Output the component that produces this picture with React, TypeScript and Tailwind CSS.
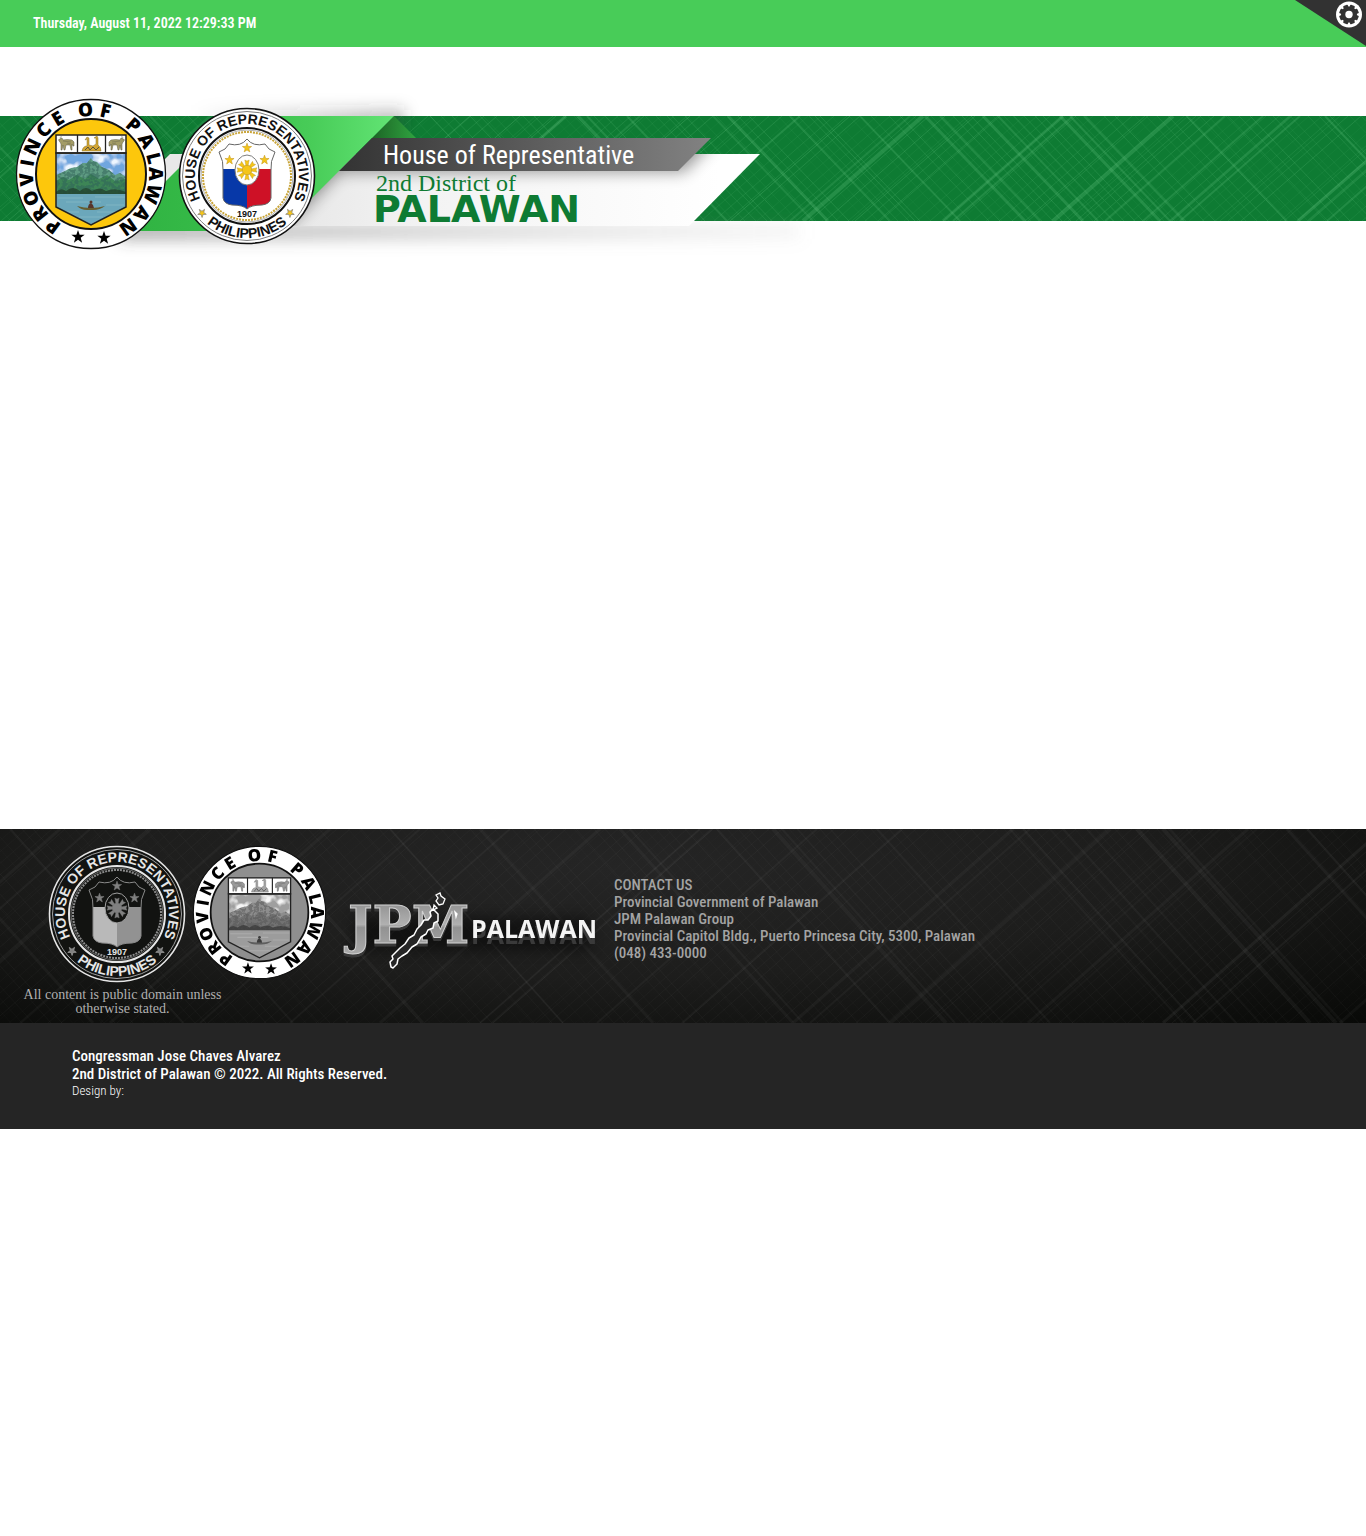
import React from "react";

const SANS = "font-['Roboto_Condensed','Roboto',sans-serif]";
const SERIF = "font-['Liberation_Serif',serif]";

const starPoints = (cx: number, cy: number, r: number, turn = 0) =>
  Array.from({ length: 10 }, (_, i) => {
    const a = ((i * 36 + turn - 90) * Math.PI) / 180;
    const q = i % 2 ? r * 0.4 : r;
    return `${(cx + q * Math.cos(a)).toFixed(2)},${(cy + q * Math.sin(a)).toFixed(2)}`;
  }).join(" ");

/* Woven diagonal lines: x at the top edge, stroke width, opacity */
type Thread = [number, number, number];

function Weave({ height, up, down, reachUp, reachDown, stroke, fine }: {
  height: number; up: Thread[]; down: Thread[]; reachUp: number; reachDown: number; stroke: string; fine: number;
}) {
  const thin = Array.from({ length: 130 }, (_, i) => i * 12 + ((i * 37) % 9));
  return (
    <svg className="absolute inset-0 h-full w-full" viewBox={`0 0 1366 ${height}`} preserveAspectRatio="xMinYMin slice" aria-hidden="true">
      <g stroke={stroke}>
        {thin.map((x, i) => (
          <g key={x} strokeWidth="1" opacity={fine * (0.3 + ((i * 7) % 6) / 6)}>
            <line x1={x} y1="0" x2={x - reachUp} y2={height} />
            <line x1={x - 180 + ((i * 5) % 7)} y1="0" x2={x - 180 + reachDown + ((i * 5) % 7)} y2={height} />
          </g>
        ))}
        {up.map(([x, w, o]) => <line key={`u${x}`} x1={x} y1="0" x2={x - reachUp} y2={height} strokeWidth={w} opacity={o} />)}
        {down.map(([x, w, o]) => <line key={`d${x}`} x1={x} y1="0" x2={x + reachDown} y2={height} strokeWidth={w} opacity={o} />)}
      </g>
    </svg>
  );
}

const bandUp: Thread[] = [
  [70, 2, 0.2], [128, 1, 0.25], [210, 2, 0.2], [470, 1, 0.3], [520, 1, 0.3], [556, 1, 0.25], [566, 3, 0.3], [640, 2, 0.2], [690, 1, 0.3], [742, 1, 0.3], [800, 2, 0.25], [850, 1, 0.3],
  [910, 2, 0.2], [923, 4, 0.28], [945, 1, 0.25], [975, 1, 0.25], [1000, 1, 0.2], [1063, 3, 0.26], [1073, 2, 0.24], [1148, 1, 0.2], [1173, 4, 0.28], [1196, 1, 0.2], [1225, 2, 0.24],
  [1263, 2, 0.24], [1290, 2, 0.26], [1300, 2, 0.26], [1340, 1, 0.16], [1418, 3, 0.3], [1428, 2, 0.2], [1447, 2, 0.24],
];
const bandDown: Thread[] = [
  [-30, 2, 0.2], [20, 2, 0.2], [60, 1, 0.2], [150, 2, 0.2], [188, 1, 0.2], [430, 1, 0.25], [480, 1, 0.2], [578, 3, 0.26], [587, 2, 0.25], [627, 2, 0.25], [672, 1, 0.2], [713, 2, 0.2], [728, 3, 0.26],
  [790, 2, 0.2], [815, 1, 0.25], [860, 2, 0.2], [925, 3, 0.26], [940, 2, 0.24], [962, 1, 0.22], [983, 3, 0.26], [998, 2, 0.24], [1014, 1, 0.2], [1043, 1, 0.22], [1060, 3, 0.28], [1070, 2, 0.26],
  [1084, 2, 0.24], [1187, 2, 0.18], [1200, 1, 0.14], [1273, 1, 0.18], [1325, 2, 0.28],
];
const floorUp: Thread[] = [
  [60, 3, 0.03], [90, 2, 0.03], [150, 4, 0.03], [240, 2, 0.03], [330, 3, 0.03], [420, 2, 0.03], [510, 2, 0.03], [600, 3, 0.03], [700, 2, 0.03], [712, 2, 0.03], [817, 2, 0.03], [902, 2, 0.03],
  [1013, 3, 0.03], [1030, 2, 0.03], [1110, 4, 0.03], [1150, 1, 0.03], [1193, 2, 0.02], [1220, 2, 0.02], [1248, 3, 0.03], [1257, 2, 0.02], [1383, 3, 0.05], [1392, 1, 0.04], [1413, 2, 0.04], [1560, 3, 0.03],
];
const floorDown: Thread[] = [
  [-80, 3, 0.03], [10, 2, 0.03], [120, 2, 0.03], [250, 3, 0.03], [390, 2, 0.03], [480, 3, 0.03], [620, 3, 0.03], [630, 2, 0.03], [717, 2, 0.03], [773, 4, 0.03], [782, 2, 0.03], [797, 1, 0.03], [830, 1, 0.03],
  [877, 2, 0.03], [1010, 2, 0.03], [1023, 2, 0.03], [1050, 2, 0.02], [1063, 2, 0.03], [1087, 2, 0.02], [1095, 1, 0.02], [1137, 4, 0.04], [1163, 4, 0.04], [1170, 2, 0.03], [1287, 3, 0.04], [1307, 2, 0.04],
];

const provinceLetters: [string, number][] = [
  ["P", -144], ["R", -128], ["O", -112], ["V", -95], ["I", -80], ["N", -65], ["C", -47], ["E", -31], ["O", -5], ["F", 13],
  ["P", 41], ["A", 59], ["L", 76], ["A", 90], ["W", 108], ["A", 128], ["N", 145],
];

const Tamaraw = () => (
  <g>
    <path d="M-8 -3 Q-9 -5 -7 -5 L-5 -6 -4 -4 Q0 -5 5 -4 L7 -2 7 2 6 2 5 0 5 6 4 6 3 1 -1 1 -2 6 -3 6 -4 1 -5 6 -6 6 -6 0 -7 -2Z" fill="#a39c66" stroke="#5c5a46" strokeWidth="0.5" />
    <path d="M-6 -5 Q-8 -8 -5 -7 M-4 -3 L4 -2 M0 -1 L4 0" stroke="#6d6a4f" strokeWidth="0.5" fill="none" />
  </g>
);

function ProvinceSeal({ className, grey = false }: { className: string; grey?: boolean }) {
  const id = grey ? "pg" : "pc";
  return (
    <svg className={className} viewBox="-76 -76 152 152" role="img" aria-label="Province of Palawan seal">
      <defs>
        <clipPath id={`${id}-shield`}><path d="M-35 -20 H35 V33 L0 51 L-35 33Z" /></clipPath>
        <filter id={`${id}-paint`} x="0" y="0" width="100%" height="100%">
          <feTurbulence type="fractalNoise" baseFrequency="0.25" numOctaves="3" seed="8" result="n" />
          <feColorMatrix in="n" type="matrix" values="0 0 0 0 0.03  0 0 0 0 0.12  0 0 0 0 0.1  8 0 0 0 -3.4" result="m" />
          <feComponentTransfer in="m" result="t"><feFuncA type="linear" slope="0.6" /></feComponentTransfer>
          <feComposite in="t" in2="SourceGraphic" operator="in" result="k" />
          <feMerge><feMergeNode in="SourceGraphic" /><feMergeNode in="k" /></feMerge>
        </filter>
        <filter id={`${id}-cloud`} x="0" y="0" width="100%" height="100%">
          <feTurbulence type="fractalNoise" baseFrequency="0.1" numOctaves="2" seed="3" result="n" />
          <feColorMatrix in="n" type="matrix" values="0 0 0 0 0.85  0 0 0 0 0.92  0 0 0 0 1  0 4 0 0 -1.8" result="m" />
          <feComposite in="m" in2="SourceGraphic" operator="in" result="k" />
          <feMerge><feMergeNode in="SourceGraphic" /><feMergeNode in="k" /></feMerge>
        </filter>
      </defs>
      <g style={{ filter: grey ? "grayscale(1)" : undefined }}>
        <circle r="74.5" fill="#fff" stroke="#111" strokeWidth="1.3" />
        <circle r="55" fill={grey ? "#8f8f8f" : "#fdc70c"} stroke="#111" strokeWidth="2" />
        <g fontFamily="Open Sans" fontWeight="800" fontSize="19" textAnchor="middle" fill="#000">
          {provinceLetters.map(([c, a], i) => <text key={i} transform={`rotate(${a})`} y="-58">{c}</text>)}
        </g>
        <polygon points={starPoints(-13, 63, 7)} />
        <polygon points={starPoints(13, 64, 7)} />
        <rect x="-35" y="-39" width="70" height="18" fill="#fff" stroke="#222" strokeWidth="1.5" />
        <path d="M-13.5 -39V-21M14.5 -39V-21" stroke="#222" strokeWidth="1.3" />
        <g transform="translate(-24 -30)"><Tamaraw /></g>
        <g transform="translate(25 -30) scale(-1 1)"><Tamaraw /></g>
        <path d="M-9 -23 Q-8 -28 -4 -28 L-4 -35 -6 -34 -4 -37 -2 -36 -2 -29 2 -28 5 -30 5 -36 3 -36 6 -38 7 -36 7 -29 Q10 -27 10 -23Z" fill="#d3a532" stroke="#85702a" strokeWidth="0.5" />
        <path d="M-6 -24 l3 -3 2 3 3 -3 3 3 3 -3" stroke="#5a5337" fill="none" strokeWidth="1" />
        <g clipPath={`url(#${id}-shield)`}>
          <rect x="-35" y="-20" width="70" height="42" fill="#6fa6df" filter={`url(#${id}-cloud)`} />
          <path d="M-35 1 L-28 -2 -20 -6 -14 -7 -8 -11 -4 -11 0 -16 2 -13 6 -12 11 -7 18 -4 24 1 29 -1 35 3 V20 H-35Z" fill="#5f9c83" filter={`url(#${id}-paint)`} />
          <path d="M-35 7 L-28 3 -22 6 -14 1 -6 5 0 0 8 5 16 1 24 7 35 5 V21 H-35Z" fill="#3d8557" filter={`url(#${id}-paint)`} />
          <path d="M-35 18 Q-30 13 -25 17 Q-18 11 -11 17 Q-5 11 1 17 Q9 12 15 17 Q24 13 35 18V22H-35Z" fill="#23422f" opacity="0.8" />
          <rect x="-35" y="20" width="70" height="32" fill="#6ba7bb" />
          <path d="M-33 24H-8M4 23H34M-25 28H10M15 31H33M-30 38H-12M6 38H25M-12 43H12" stroke="#8fc2ce" strokeWidth="1.2" opacity="0.6" />
          <path d="M-14 32 Q0 36 14 32 Q9 36 2 36 H-4 Q-10 36 -14 32Z" fill="#655f32" />
          <path d="M-3 34 Q-3 30 0 29 Q3 31 3 34Z" fill="#57352a" /><circle cy="28" r="1.5" fill="#57352a" />
        </g>
        <path d="M-35 -21 H35 V33 L0 51 L-35 33Z" fill="none" stroke="#222" strokeWidth="1.5" />
      </g>
    </svg>
  );
}

function HouseSeal({ className, grey = false }: { className: string; grey?: boolean }) {
  const ink = grey ? "#e6e6e6" : "#111";
  const paper = grey ? "#121311" : "#fff";
  const gold = grey ? "#808080" : "#f5c518";
  const line = grey ? "#a0a0a0" : "#7d7d7d";
  const id = grey ? "hg" : "hc";
  const shield = "M0 -37 Q-6 -29 -18 -32 Q-21 -26 -28 -24 Q-23 -14 -24 -6 V22 Q-23 28 -15 29 Q-4 29 0 33 Q4 29 15 29 Q23 28 24 22 V-6 Q23 -14 28 -24 Q21 -26 18 -32 Q6 -29 0 -37Z";
  return (
    <svg className={className} viewBox="-69 -69 138 138" role="img" aria-label="House of Representatives seal">
      <defs>
        <clipPath id={`${id}-s`}><path d={shield} /></clipPath>
        <path id={`${id}-top`} d="M0 52 A52 52 0 0 1 0 -52 A52 52 0 0 1 0 52" />
        <path id={`${id}-low`} d="M-62 0 A62 62 0 0 0 62 0" />
      </defs>
      <circle r="67.5" fill={paper} stroke={ink} strokeWidth="1.6" />
      <circle r="64.5" fill="none" stroke={line} strokeWidth="1" />
      <circle r="48" fill="none" stroke={ink} strokeWidth="2" />
      <circle r="44" fill="none" stroke={grey ? "#8b8b8b" : "#c9a53a"} strokeWidth="2" strokeDasharray="2 1" />
      <circle r="46" fill="none" stroke={line} strokeWidth="0.6" />
      <g fontFamily="Liberation Sans" fontWeight="700" fontSize="14" textAnchor="middle" fill={ink}>
        <text><textPath href={`#${id}-top`} startOffset="50%">HOUSE OF REPRESENTATIVES</textPath></text>
        <text><textPath href={`#${id}-low`} startOffset="50%">PHILIPPINES</textPath></text>
        <text y="41" fontSize="9">1907</text>
      </g>
      <polygon points={starPoints(-45, 37, 4.5, 35)} fill={gold} stroke={line} strokeWidth="0.7" />
      <polygon points={starPoints(43, 37, 4.5, -35)} fill={gold} stroke={line} strokeWidth="0.7" />
      <g clipPath={`url(#${id}-s)`}>
        <rect x="-30" y="-40" width="60" height="80" fill={paper} />
        <rect x="-25" y="-7" width="25" height="42" fill={grey ? "#b9b9b9" : "#0738a8"} />
        <rect x="0" y="-7" width="25" height="42" fill={grey ? "#929292" : "#ce1126"} />
      </g>
      <path d={shield} fill="none" stroke={grey ? "#8a8a8a" : "#666"} strokeWidth="1" />
      <ellipse cy="-6" rx="12" ry="15" fill={paper} stroke={line} strokeWidth="1" />
      {Array.from({ length: 8 }, (_, i) => (
        <path key={i} transform={`translate(0 -6) rotate(${i * 45})`} d="M-1 -4 L-2.2 -10 0 -9 2.2 -10 1 -4Z" fill={gold} stroke={grey ? "#777" : "#b8962b"} strokeWidth="0.4" />
      ))}
      <circle cy="-6" r="4.8" fill={gold} stroke={grey ? "#777" : "#b8962b"} strokeWidth="0.6" />
      {[[0, -28], [-17.5, -16], [17.5, -16]].map(([x, y]) => (
        <polygon key={x} points={starPoints(x, y, 4.8)} fill={gold} stroke={grey ? "#777" : "#c79c20"} strokeWidth="0.6" />
      ))}
    </svg>
  );
}

const Ribbon = () => (
  <svg className="absolute left-0 -top-[46px] h-[200px] w-[860px] max-w-none" viewBox="0 70 860 200" aria-hidden="true">
    <defs>
      <linearGradient id="lime" x1="0" x2="1"><stop offset="0" stopColor="#2fb141" /><stop offset="0.35" stopColor="#36bb48" /><stop offset="0.7" stopColor="#48cc58" /><stop offset="1" stopColor="#62e474" /></linearGradient>
      <linearGradient id="steel" x1="0" x2="1"><stop offset="0" stopColor="#333" /><stop offset="1" stopColor="#828282" /></linearGradient>
      <linearGradient id="paper" gradientUnits="userSpaceOnUse" x1="300" y1="0" x2="720" y2="0"><stop offset="0" stopColor="#e8e8e8" /><stop offset="0.3" stopColor="#f3f3f3" /><stop offset="1" stopColor="#fff" /></linearGradient>
      <linearGradient id="fold" x1="0" x2="1"><stop offset="0" stopColor="#1c6425" /><stop offset="1" stopColor="#30a340" /></linearGradient>
      <filter id="soft" filterUnits="userSpaceOnUse" x="0" y="70" width="860" height="200"><feGaussianBlur stdDeviation="8" /></filter>
      <clipPath id="leaf"><path d="M170 154H760L694 221L689 226H98Z" /></clipPath>
      <linearGradient id="fade" x1="0" x2="1"><stop offset="0" stopColor="#444" stopOpacity="0.5" /><stop offset="1" stopColor="#999" stopOpacity="0.1" /></linearGradient>
      <linearGradient id="rise" x1="0" x2="1"><stop offset="0" stopColor="#333" stopOpacity="0" /><stop offset="1" stopColor="#333" stopOpacity="0.35" /></linearGradient>
    </defs>
    <path d="M190 110H404V130H190Z" fill="url(#rise)" filter="url(#soft)" />
    <path d="M120 224H800V239H120Z" fill="url(#fade)" filter="url(#soft)" />
    <path d="M0 116H231L116 221H0Z M394 116H860V221H694L760 154H372Z" fill="none" />
    <path d="M170 154H760L694 221L689 226H98Z" fill="url(#paper)" />
    <g clipPath="url(#leaf)">
      <path d="M300 140H715L684 172H340L275 240H230Z" fill="#000" opacity="0.4" filter="url(#soft)" />
    </g>
    <path d="M394 116L416 138H372Z" fill="url(#fold)" />
    <path d="M231 116H394L279 231H116Z" fill="url(#lime)" />
    <path d="M372 138H711L678 171H339Z" fill="url(#steel)" />
  </svg>
);

const JpmLogo = () => (
  <svg className="h-[100px] w-[270px] shrink-0" viewBox="340 880 270 100" role="img" aria-label="JPM Palawan">
    <defs>
      <linearGradient id="metal" x1="0" x2="0" y1="0" y2="1"><stop offset="0" stopColor="#868686" /><stop offset="0.5" stopColor="#b0b0b0" /><stop offset="0.55" stopColor="#929292" /><stop offset="1" stopColor="#ababab" /></linearGradient>
      <filter id="halo" x="-20%" y="-100%" width="140%" height="300%"><feGaussianBlur stdDeviation="7" /></filter>
    </defs>
    <path d="M355 918H590V950H355Z" fill="#000" opacity="0.45" filter="url(#halo)" />
    <g fontFamily="DejaVu Serif" fontWeight="700" fontSize="52" style={{ filter: "drop-shadow(0 3px 0 #383838)" }}>
      <text x="348" y="943" fill="url(#metal)" stroke="#d0d0d0" strokeWidth="1">JPM</text>
    </g>
    <g fontFamily="Open Sans" fontWeight="700" fontSize="25" style={{ filter: "drop-shadow(0 6px 0 #3a3a3a)" }}>
      <text x="471" y="938" fill="#f4f4f4">PALAWAN</text>
    </g>
    <path d="M391 967 L390 962 393 959 392 956 396 952 400 948 405 944 409 938 414 935 417 929 421 925 424 920 428 920 431 916 430 912 433 909 438 914 438 921 434 923 433 928 428 930 426 934 421 937 417 944 412 947 407 953 402 956 398 959 397 964 393 968Z" fill="#262626" stroke="#fff" strokeWidth="1.5" strokeLinejoin="round" />
    <path d="M436 895 L440 893 441 896 445 899 443 904 439 905 436 901 438 898Z M434 905l3 3-4 2z M455 912l2 2-1 3z" fill="#333" stroke="#fff" strokeWidth="1.3" />
  </svg>
);

const CornerSettings = () => (
  <button type="button" aria-label="Settings" className="h-[46px] w-[71px] cursor-pointer">
    <svg className="h-full w-full" viewBox="0 0 71 46" aria-hidden="true">
      <path d="M0 0H71V46Z" fill="#323232" />
      <circle cx="54" cy="14.5" r="13" fill="#fff" />
      <g transform="translate(54 14.5)" fill="#323232">
        {[0, 45, 90, 135].map((a) => <rect key={a} x="-2.5" y="-9.8" width="5" height="19.6" rx="0.8" transform={`rotate(${a + 22.5})`} />)}
        <circle r="8" />
        <circle r="3.7" fill="#fff" />
      </g>
    </svg>
  </button>
);

export default function App() {
  return (
    <div className={`min-h-screen bg-white ${SANS}`}>
      <div className="flex h-[47px] items-start justify-between bg-[#48cc58] pl-[33px]">
        <time className="pt-[13px] text-[14px] font-semibold leading-5 text-white">Thursday, August 11, 2022 12:29:33 PM</time>
        <CornerSettings />
      </div>

      <header className="relative mt-[69px] h-[105px] bg-[#0e7b33]">
        <Weave height={105} up={bandUp} down={bandDown} reachUp={120} reachDown={100} stroke="#5fbf7c" fine={0.2} />
        <Ribbon />
        <ProvinceSeal className="absolute left-[15px] -top-[18px] size-[152px] overflow-visible" />
        <HouseSeal className="absolute left-[178px] -top-[9px] size-[138px] overflow-visible" />
        <div className="relative pl-[376px] pt-[22px]">
          <h1 className="pl-[7px] text-[26px] leading-[34px] text-white">House of Representative</h1>
          <p className={`text-[24px] leading-[23px] text-[#0e7b33] ${SERIF}`}>2nd District of</p>
          <p className="-ml-[3px] -mt-[2px] font-['DejaVu_Sans',sans-serif] text-[38px] font-bold leading-8 text-[#0e7b33]">PALAWAN</p>
        </div>
      </header>

      <main className="h-[608px]" />

      <footer>
        <section className="relative bg-[radial-gradient(ellipse_at_45%_20%,#252525_0%,#1d1d1c_50%,#080907_100%)]">
          <Weave height={194} up={floorUp} down={floorDown} reachUp={220} reachDown={173} stroke="#ffffff" fine={0.025} />
          <div className="relative flex h-[194px] pl-[22px] pt-4">
            <div>
              <div className="flex gap-[6px] pl-[26px]">
                <HouseSeal grey className="size-[138px] overflow-visible" />
                <ProvinceSeal grey className="size-[135px] overflow-visible" />
              </div>
              <p className={`mt-[5px] w-[201px] text-center text-[14px] leading-[14px] text-[#b0b0b0] ${SERIF}`}>All content is public domain unless otherwise stated.</p>
            </div>
            <div className="flex pl-[13px] pt-[35px]"><JpmLogo /></div>
            <address className="pl-1 pt-8 text-[15px] font-medium not-italic leading-[17px] text-[#a3a3a3]">
              CONTACT US<br />
              Provincial Government of Palawan<br />
              JPM Palawan Group<br />
              Provincial Capitol Bldg., Puerto Princesa City, 5300, Palawan<br />
              (048) 433-0000
            </address>
          </div>
        </section>
        <section className="h-[106px] bg-[#252525] pl-[72px] pt-6 text-white">
          <p className="text-[15px] font-medium leading-[18px]">Congressman Jose Chaves Alvarez</p>
          <p className="text-[15px] font-medium leading-[18px]">2nd District of Palawan © 2022. All Rights Reserved.</p>
          <p className="text-[13px] font-light leading-4">Design by:</p>
        </section>
      </footer>
    </div>
  );
}
